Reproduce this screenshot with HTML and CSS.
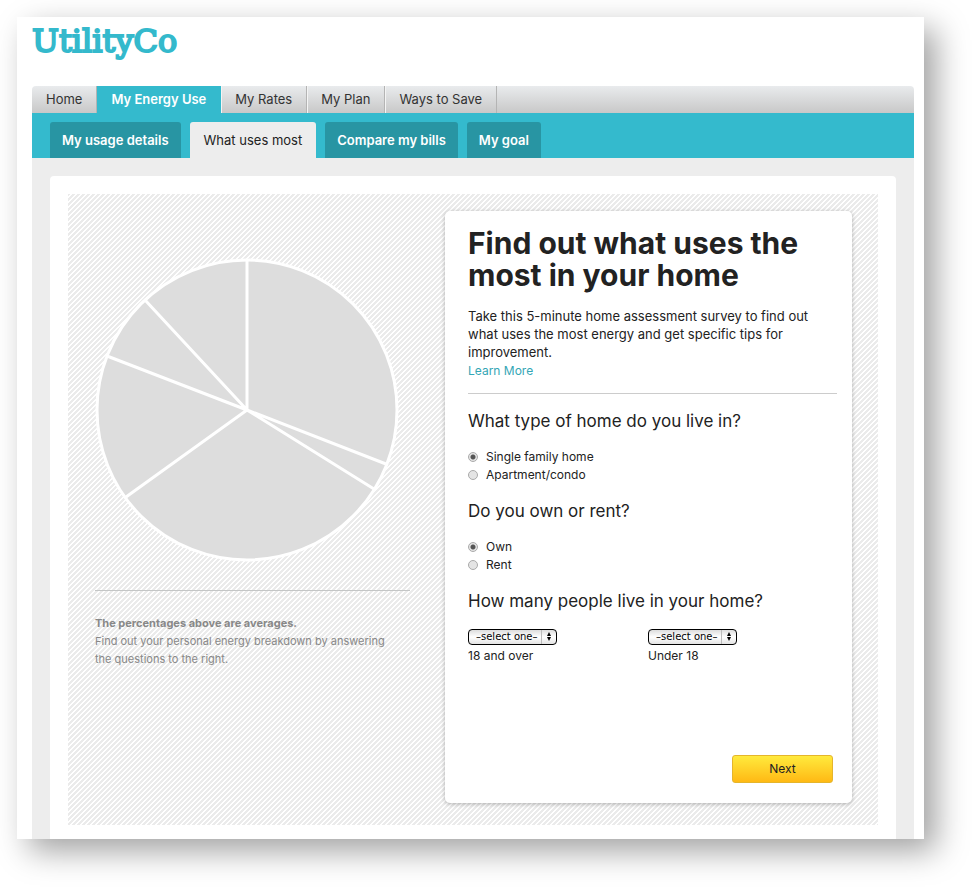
FILE: index.html
```html
<!DOCTYPE html>
<html lang="en">
<head>
<meta charset="utf-8">
<title>UtilityCo - What uses most</title>
<link rel="stylesheet" href="styles.css">
</head>
<body>
<div class="page">
  <header class="header"><a class="logo" href="#">UtilityCo</a></header>
  <nav class="nav" aria-label="Main">
    <a class="nav-item" href="#">Home</a>
    <a class="nav-item nav-item-active" href="#">My Energy Use</a>
    <a class="nav-item" href="#">My Rates</a>
    <a class="nav-item" href="#">My Plan</a>
    <a class="nav-item" href="#">Ways to Save</a>
  </nav>
  <nav class="tabs" aria-label="My Energy Use">
    <a class="tab" href="#">My usage details</a>
    <a class="tab tab-active" href="#">What uses most</a>
    <a class="tab" href="#">Compare my bills</a>
    <a class="tab" href="#">My goal</a>
  </nav>
  <main class="main">
    <div class="sheet">
      <div class="stripes">
        <section class="chart">
          <svg class="pie" viewBox="0 0 304 304" aria-hidden="true">
            <circle cx="152" cy="152" r="150"/>
            <path d="M152 2V152L291 206M152 152L279 231M152 152L31 239M152 152L12 98M152 152L50 42"/>
          </svg>
          <div class="note">
            <strong>The percentages above are averages.</strong>
            <p>Find out your personal energy breakdown by answering the questions to the right.</p>
          </div>
        </section>
        <form class="survey">
          <h1>Find out what uses the most in your home</h1>
          <div class="intro">
            <p>Take this 5-minute home assessment survey to find out what uses the most energy and get specific tips for improvement.</p>
            <a class="more" href="#">Learn More</a>
          </div>
          <fieldset>
            <legend>What type of home do you live in?</legend>
            <label class="choice"><input type="radio" name="type" checked>Single family home</label>
            <label class="choice"><input type="radio" name="type">Apartment/condo</label>
          </fieldset>
          <fieldset>
            <legend>Do you own or rent?</legend>
            <label class="choice"><input type="radio" name="tenure" checked>Own</label>
            <label class="choice"><input type="radio" name="tenure">Rent</label>
          </fieldset>
          <fieldset>
            <legend>How many people live in your home?</legend>
            <div class="counts">
              <div class="count">
                <span class="picker"><select id="adults"><option>–select one–</option></select>
                  <svg class="arrows" viewBox="0 0 6 9" aria-hidden="true"><path d="M1 4L3 0L5 4ZM1 5L3 9L5 5Z"/></svg></span>
                <label for="adults">18 and over</label>
              </div>
              <div class="count">
                <span class="picker"><select id="minors"><option>–select one–</option></select>
                  <svg class="arrows" viewBox="0 0 6 9" aria-hidden="true"><path d="M1 4L3 0L5 4ZM1 5L3 9L5 5Z"/></svg></span>
                <label for="minors">Under 18</label>
              </div>
            </div>
          </fieldset>
          <button class="next" type="button">Next</button>
        </form>
      </div>
    </div>
  </main>
</div>
</body>
</html>
```
FILE: styles.css
```css
* { box-sizing: border-box; }
body {
  margin: 0;
  padding: 17px 48px 48px 17px;
  background: #fff;
  color: #222;
  font: 13px/18px Inter, "Liberation Sans", sans-serif;
}
a { text-decoration: none; }
p { margin: 0; }
.page {
  padding: 0 10px 0 15px;
  background: #fff;
  box-shadow: 12px 12px 30px rgba(0, 0, 0, .37);
}
.header { height: 69px; padding-top: 4px; }
.logo {
  color: #34b9cc;
  font: 32px/40px "DejaVu Serif", serif;
  -webkit-text-stroke: 2px #34b9cc;
}
.nav {
  display: flex;
  height: 27px;
  border-radius: 4px 4px 0 0;
  background: linear-gradient(#e9ebed, #c8c8c8);
  overflow: hidden;
}
.nav-item {
  padding: 0 14px 0 13px;
  border-left: 1px solid #f4f4f4;
  border-right: 1px solid #b4b4b4;
  color: #333;
  line-height: 27px;
}
.nav-item:first-child { border-left-color: transparent; }
.nav-item-active {
  border-color: #34bacd;
  background: #34bacd;
  color: #fff;
  font-weight: 600;
}
.tabs {
  display: flex;
  gap: 9px;
  padding: 9px 18px 0;
  background: #34bacd;
}
.tab {
  padding: 0 12px;
  border-radius: 3px 3px 0 0;
  background: #2895a3;
  color: #fff;
  font-weight: 600;
  line-height: 36px;
}
.tab-active { padding: 0 14px; background: #ededed; color: #222; font-weight: 400; }
.main { padding: 18px 18px 0; background: #ededed; }
.sheet {
  padding: 18px 18px 14px;
  border-radius: 4px 4px 0 0;
  background: #fff;
}
.stripes {
  display: grid;
  grid-template-columns: minmax(0, 315fr) minmax(0, 407fr);
  gap: 35px;
  padding: 17px 26px 22px 27px;
  background: linear-gradient(135deg, #ebebeb 25%, #fff 25%, #fff 50%, #ebebeb 50%, #ebebeb 75%, #fff 75%) 0 0 / 5px 5px;
}
.chart { padding-top: 47px; }
.pie { display: block; width: 304px; max-width: 100%; }
.pie circle { fill: #ddd; stroke: #fff; stroke-width: 3; }
.pie path { fill: none; stroke: #fff; stroke-width: 3; }
.note {
  margin-top: 28px;
  padding-top: 23px;
  border-top: 1px solid #c4c6c6;
  color: #888;
  font-size: 11px;
}
.note p { padding-right: 14px; }
.survey {
  padding: 16px 15px 20px 23px;
  border-radius: 5px;
  background: #fff;
  box-shadow: 0 1px 4px rgba(0, 0, 0, .28);
}
h1 { margin: 0; font-size: 30px; line-height: 32px; }
.intro { margin-top: 16px; padding-bottom: 13px; border-bottom: 1px solid #ccc; }
.more { color: #34a6b5; font-size: 12px; }
fieldset { min-width: 0; margin: 0; padding: 18px 0 0; border: 0; }
legend { float: left; width: 100%; margin-bottom: 18px; padding: 0; font-size: 17px; }
.choice { display: flex; clear: both; align-items: center; gap: 8px; font-size: 12px; }
input {
  appearance: none;
  width: 10px;
  height: 10px;
  margin: 0;
  border: 1px solid #aaa;
  border-radius: 50%;
  background: #e4e4e4;
}
input:checked { background: radial-gradient(circle, #555 2px, #e4e4e4 3px); }
.counts { display: flex; clear: both; padding-top: 1px; }
.count { display: grid; width: 180px; font-size: 12px; }
.picker { position: relative; width: 89px; height: 16px; margin-bottom: 2px; }
select {
  appearance: none;
  display: block;
  width: 100%;
  height: 16px;
  padding: 0 0 0 7px;
  border: 1px solid #000;
  border-radius: 4px;
  background: linear-gradient(#bbb, #bbb) 72px 0 / 1px 100% no-repeat, linear-gradient(#ddd, #fff 50%, #e4e4e4);
  color: #000;
  font: 10px/12px "DejaVu Sans", sans-serif;
}
.arrows { position: absolute; top: 3px; right: 5px; width: 6px; height: 9px; }
.next {
  display: block;
  width: 101px;
  height: 28px;
  margin: 90px 4px 0 auto;
  border: 1px solid #e5b52c;
  border-radius: 3px;
  background: linear-gradient(#ffea3d, #ffb914);
  color: #222;
  font: 12px/18px Inter, "Liberation Sans", sans-serif;
}
```
